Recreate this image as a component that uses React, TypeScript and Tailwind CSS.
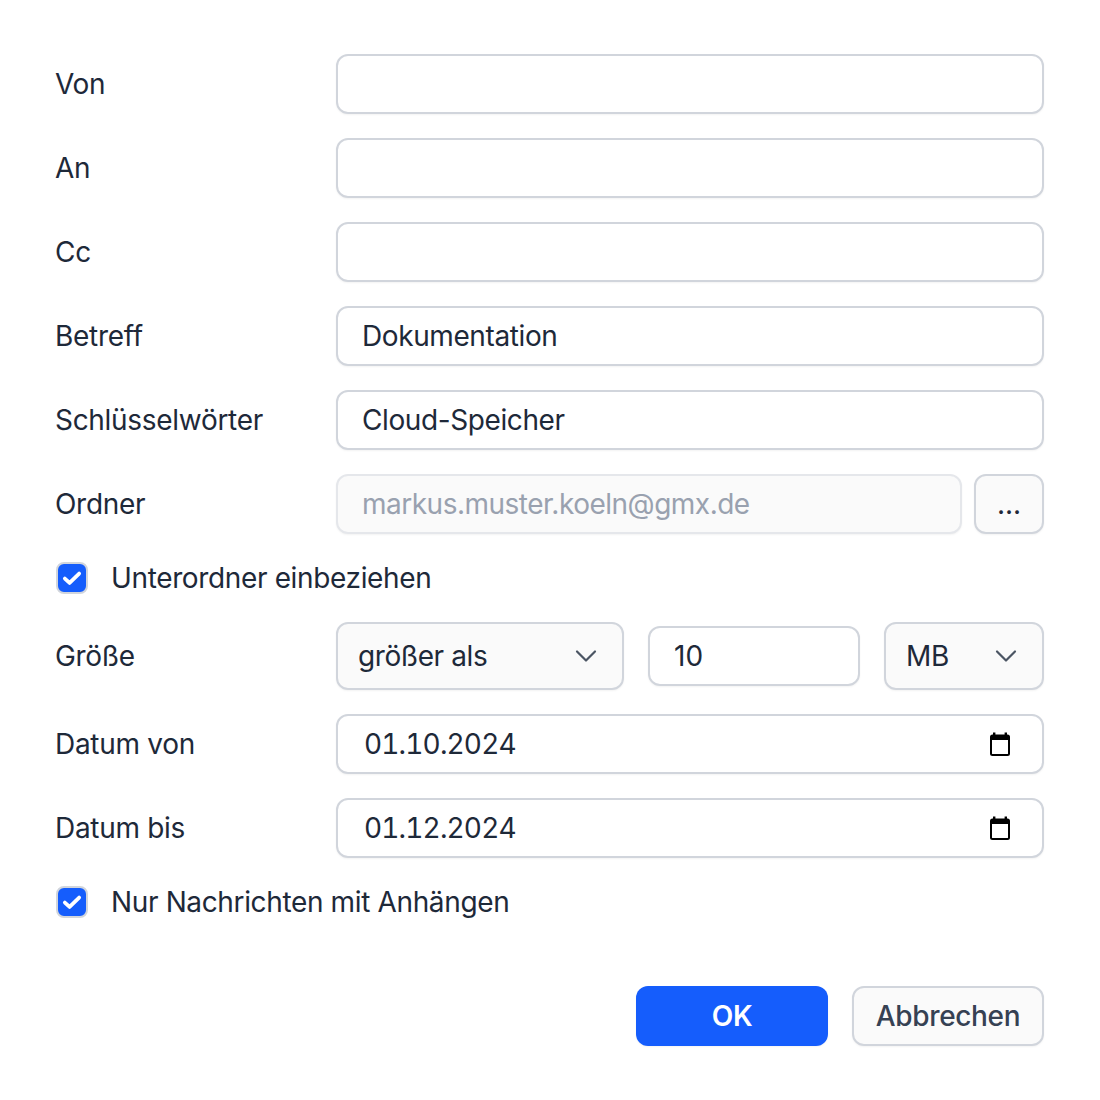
const font = "font-['Inter',sans-serif]";

function Chevron() {
  return (
    <svg width="24" height="24" viewBox="0 0 24 24" fill="none" stroke="#4b5563" strokeWidth="2.2" strokeLinecap="round" strokeLinejoin="round">
      <path d="M3 7.5l9 9 9-9" />
    </svg>
  );
}

function CalendarIcon() {
  return (
    <svg width="24" height="24" viewBox="0 0 24 24" fill="#000">
      <path d="M5 0.5h2.4v2h9.2v-2H19v2h0.5A2.5 2.5 0 0 1 22 5v16.5a2.5 2.5 0 0 1-2.5 2.5h-15A2.5 2.5 0 0 1 2 21.500V5a2.500 2.500 0 0 1 2.500-2.500H5zM4 8v13.500a0.500 0.500 0 0 0 0.500 0.500h15a0.500 0.500 0 0 0 0.500-0.500V8z" />
    </svg>
  );
}

function Check({ label }: { label: string }) {
  return (
    <div className="flex items-center gap-6 h-8">
      <span className="w-8 h-8 rounded-lg bg-[#155dfc] border-2 border-[#d1d5dc] flex items-center justify-center">
        <svg width="22" height="22" viewBox="0 0 20 20" fill="none" stroke="#fff" strokeWidth="3.4" strokeLinecap="round" strokeLinejoin="round">
          <path d="M3.500 10.500l4.300 4 8.700-8.500" />
        </svg>
      </span>
      <span className="-ml-px text-[28px] tracking-[-0.36px] text-[#1e2939]">{label}</span>
    </div>
  );
}

function Row({ label, children }: { label: string; children: React.ReactNode }) {
  return (
    <div className="flex items-center">
      <span className="w-[280px] shrink-0 -ml-px mr-px text-[28px] tracking-[-0.3px] text-[#1e2939]">{label}</span>
      {children}
    </div>
  );
}

function TextField({ value }: { value?: string }) {
  return (
    <div className="flex-1 h-[60px] rounded-xl border-2 border-[#d1d5dc] bg-white px-6 flex items-center text-[28px] tracking-[-0.4px] text-[#1e2939] shadow-[0_1px_2px_rgba(0,0,0,0.05)]">
      {value}
    </div>
  );
}

function DateField({ value }: { value: string }) {
  return (
    <div className="flex-1 h-[60px] rounded-xl border-2 border-[#d1d5dc] bg-white pl-[26px] pr-[30px] flex items-center justify-between text-[28px] tabular-nums tracking-[-0.85px] text-[#1e2939] shadow-[0_1px_2px_rgba(0,0,0,0.05)]">
      {value}
      <CalendarIcon />
    </div>
  );
}

export default function App() {
  return (
    <div className={`${font} w-[1100px] h-[1100px] bg-white px-14 pt-[54px] flex flex-col`}>
      <div className="flex flex-col gap-6">
        <Row label="Von"><TextField /></Row>
        <Row label="An"><TextField /></Row>
        <Row label="Cc"><TextField /></Row>
        <Row label="Betreff"><TextField value="Dokumentation" /></Row>
        <Row label="Schlüsselwörter"><TextField value="Cloud-Speicher" /></Row>
        <Row label="Ordner">
          <div className="flex-1 flex gap-3">
            <div className="flex-1 h-[60px] rounded-xl border-2 border-[#e5e7eb] bg-[#fafafa] px-6 flex items-center text-[28px] tracking-[-0.5px] text-[#99a1af] shadow-[0_1px_2px_rgba(0,0,0,0.05)]">
              markus.muster.koeln@gmx.de
            </div>
            <div className="w-[70px] h-[60px] rounded-xl border-2 border-[#d1d5dc] bg-[#fafafa] flex items-center justify-center text-[28px] text-[#1e2939] shadow-[0_1px_2px_rgba(0,0,0,0.05)]">
              ...
            </div>
          </div>
        </Row>
      </div>
      <div className="mt-7">
        <Check label="Unterordner einbeziehen" />
      </div>
      <div className="mt-7 flex flex-col gap-6">
        <Row label="Größe">
          <div className="flex-1 flex items-center gap-6">
            <div className="w-[288px] h-[68px] rounded-xl border-2 border-[#d1d5dc] bg-[#fafafa] pl-5 pr-6 flex items-center justify-between text-[28px] tracking-[-0.4px] text-[#1e2939] shadow-[0_1px_2px_rgba(0,0,0,0.05)]">
              größer als
              <Chevron />
            </div>
            <div className="w-[212px] h-[60px] rounded-xl border-2 border-[#d1d5dc] bg-white px-6 flex items-center text-[28px] text-[#1e2939] shadow-[0_1px_2px_rgba(0,0,0,0.05)]">
              10
            </div>
            <div className="flex-1 h-[68px] rounded-xl border-2 border-[#d1d5dc] bg-[#fafafa] pl-5 pr-6 flex items-center justify-between text-[28px] tracking-[-0.4px] text-[#1e2939] shadow-[0_1px_2px_rgba(0,0,0,0.05)]">
              MB
              <Chevron />
            </div>
          </div>
        </Row>
        <Row label="Datum von"><DateField value="01.10.2024" /></Row>
        <Row label="Datum bis"><DateField value="01.12.2024" /></Row>
      </div>
      <div className="mt-7">
        <Check label="Nur Nachrichten mit Anhängen" />
      </div>
      <div className="mt-[68px] flex justify-end gap-6">
        <div className="w-[192px] h-[60px] rounded-xl bg-[#155dfc] flex items-center justify-center text-[28px] font-semibold tracking-[-0.36px] text-white shadow-[0_1px_2px_rgba(0,0,0,0.05)]">OK</div>
        <div className="w-[192px] h-[60px] rounded-xl border-2 border-[#d1d5dc] bg-[#fafafa] flex items-center justify-center text-[28px] font-medium tracking-[-0.36px] text-[#364153] shadow-[0_1px_2px_rgba(0,0,0,0.05)]">Abbrechen</div>
      </div>
    </div>
  );
}
